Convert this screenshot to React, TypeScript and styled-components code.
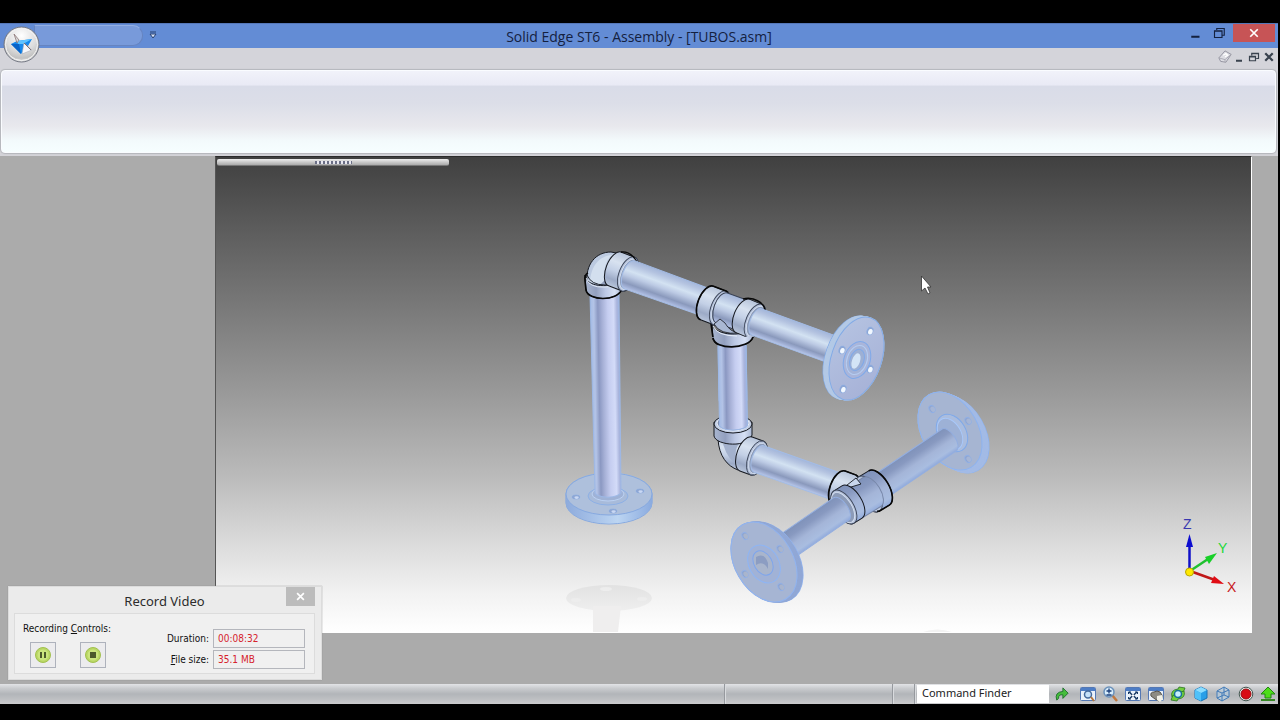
import React from "react";
import styled, { createGlobalStyle, css } from "styled-components";

const GlobalStyle = createGlobalStyle`
  * { box-sizing: border-box; }
  body { margin: 0; background: #000; font-family: "Noto Sans", "Open Sans", sans-serif; }
  button { font: inherit; padding: 0; margin: 0; border: 0; background: none; cursor: default; }
`;

const Screen = styled.div`
  min-height: 100vh;
  padding: 23px 2px 16px 0;
  display: flex;
  flex-direction: column;
  background: #000;
`;

const AppWindow = styled.div`
  flex: 1;
  display: flex;
  flex-direction: column;
  position: relative;
  background: #d3d3d8;
`;

const TitleBar = styled.header`
  height: 25px;
  display: grid;
  grid-template-columns: 1fr auto 1fr;
  background: #638cd5;
  border-top: 1px solid #5577b8;
`;

const QuickAccess = styled.div`
  display: flex;
  align-items: flex-start;
  gap: 6px;
  padding: 1px 0 0 34px;
`;

const QuickTray = styled.div`
  width: 109px;
  height: 21px;
  border: 1px solid #6684c0;
  border-top-color: #93aee2;
  border-radius: 0 10px 10px 0;
  background: #789ada;
`;

const QuickMenu = styled.button`
  width: 8px;
  height: 20px;
  display: grid;
  place-items: center;
`;

const Title = styled.h1`
  margin: 0;
  font-family: "Open Sans", "Noto Sans", sans-serif;
  font-size: 14px;
  line-height: 25px;
  font-weight: 400;
  color: #14213f;
`;

const WindowButtons = styled.div`
  display: flex;
  justify-content: flex-end;
  align-items: flex-start;
  padding-right: 3px;
`;

const WindowButton = styled.button<{ $close?: boolean }>`
  width: ${(p) => (p.$close ? 42 : 24)}px;
  height: 18px;
  margin-left: ${(p) => (p.$close ? 2 : 0)}px;
  display: grid;
  place-items: center;
  background: ${(p) => (p.$close ? "#c75456" : "transparent")};
`;

const AppButton = styled.button`
  position: absolute;
  left: 3px;
  top: 3px;
  width: 37px;
  height: 37px;
`;

const MenuBar = styled.nav`
  height: 22px;
  display: flex;
  justify-content: flex-end;
  align-items: flex-start;
  gap: 3px;
  padding: 2px 3px 0 0;
  background: #d4d4da;
`;

const MenuButton = styled.button`
  width: 12px;
  height: 14px;
  display: grid;
  place-items: center;
`;

const Ribbon = styled.section`
  height: 83px;
  margin: 0 2px 0 1px;
  border: 1px solid #fafcff;
  border-radius: 4px;
  box-shadow: 0 0 1px 1px #b4b6bc;
  background: linear-gradient(#f1f2fa 0, #e9eaf5 17%, #d9dce8 19%, #dcdee8 40%, #e8e8ed 68%, #f3fafc 86%, #f6feff 100%);
`;

const Workspace = styled.main`
  flex: 1;
  position: relative;
  display: flex;
  margin-top: 3px;
  padding: 0 26px 51px 215px;
  background: #ababab;
`;

const Viewport = styled.section`
  flex: 1;
  min-height: 400px;
  display: flex;
  flex-direction: column;
  border: 1px solid #fff;
  border-left-color: #555;
  border-top-color: #2b2b2b;
  background: linear-gradient(#404040 0, #5c5c5c 15%, #787878 31%, #989898 49%, #bababa 67%, #d8d8d8 80%, #f2f2f2 92%, #fff 100%);
`;

const DockHandle = styled.div`
  width: 232px;
  height: 7px;
  margin: 2px 0 0 1px;
  display: grid;
  place-items: center;
  border-radius: 2px;
  border-bottom: 1px solid #777;
  background: linear-gradient(#ececec, #a9a9a9);
`;

const Grip = styled.div`
  width: 37px;
  height: 3px;
  background: repeating-linear-gradient(90deg, #6b6f86 0 2px, #e8e8f0 2px 4px);
`;

const Scene = styled.svg`
  display: block;
  flex: 1;
  width: 100%;
  min-height: 0;
`;

const Dialog = styled.section`
  position: absolute;
  left: 8px;
  bottom: 4px;
  width: 314px;
  border: 1px solid #dcdcdc;
  background: #ebebeb;
  padding: 0 6px 5px 5px;
  box-shadow: 0 0 1px #888;
`;

const DialogHeader = styled.header`
  height: 26px;
  display: grid;
  grid-template-columns: 29px 1fr 29px;
`;

const DialogTitle = styled.h2`
  margin: 0;
  font-size: 13px;
  line-height: 28px;
  font-weight: 400;
  text-align: center;
  color: #2c2c2c;
`;

const DialogClose = styled.button`
  width: 29px;
  height: 19px;
  display: grid;
  place-items: center;
  background: #bcbcbc;
`;

const DialogBody = styled.div`
  height: 61px;
  display: flex;
  justify-content: space-between;
  padding: 8px 9px 0 8px;
  border: 1px solid #dcdcdc;
  background: #f0f0f0;
  font-family: "DejaVu Sans Condensed", "DejaVu Sans", sans-serif;
  font-size: 10px;
  line-height: 13px;
  color: #111;
`;

const Controls = styled.div`
  display: flex;
  flex-direction: column;
  gap: 7px;
`;

const ControlRow = styled.div`
  display: flex;
  gap: 24px;
  padding-left: 7px;
`;

const RecordButton = styled.button`
  width: 26px;
  height: 26px;
  display: grid;
  place-items: center;
  border: 1px solid #aeb2bc;
  background: #ececee;
`;

const Fields = styled.div`
  display: flex;
  flex-direction: column;
  gap: 2px;
  padding-top: 7px;
`;

const Field = styled.label`
  display: flex;
  justify-content: flex-end;
  align-items: center;
  gap: 4px;
`;

const Readout = styled.input`
  width: 92px;
  height: 19px;
  padding: 0 4px;
  border: 1px solid #b4b6bc;
  background: #f0f0f0;
  font: inherit;
  color: #d6232c;
  outline: none;
`;

const StatusBar = styled.footer`
  height: 20px;
  display: flex;
  background: linear-gradient(#e2e3e6 0, #c9cbce 22%, #b2b5b9 50%, #bdbfc2 75%, #cbcbcd 100%);
`;

const pane = css`
  border-right: 1px solid #96999e;
  box-shadow: 1px 0 0 #d9dbde;
`;

const StatusPane = styled.div<{ $width?: number }>`
  ${pane}
  flex: ${(p) => (p.$width ? `0 0 ${p.$width}px` : "1")};
`;

const CommandFinder = styled.input`
  width: 132px;
  height: 18px;
  margin: 1px 5px 0 2px;
  padding: 0 4px 3px 5px;
  border: 0;
  outline: none;
  background: #fff;
  font: 11px "Noto Sans", "Open Sans", sans-serif;
  color: #222;
  &::placeholder { color: #222; opacity: 1; }
`;

const ViewTools = styled.div`
  width: 196px;
  margin: 0 2px 0 10px;
  display: flex;
  justify-content: space-between;
`;

const ToolButton = styled.button`
  width: 16px;
  height: 20px;
  display: grid;
  place-items: center;
`;

type CylinderProps = {
  x1: number; y1: number; x2: number; y2: number;
  r: number; end?: number; k?: number; paint?: string; stroke?: string; mouth?: boolean; heavy?: boolean;
};

/* A shaded cylinder whose near end is (x2, y2); k is the foreshortening of its caps. */
function Cylinder({ x1, y1, x2, y2, r, end = r, k = 0.5, paint = "steel", stroke = "#a3bce6", mouth, heavy }: CylinderProps) {
  const len = Math.hypot(x2 - x1, y2 - y1);
  const angle = (Math.atan2(y2 - y1, x2 - x1) * 180) / Math.PI;
  return (
    <g transform={`translate(${x1} ${y1}) rotate(${angle})`} stroke={stroke}>
      <path
        d={`M0 ${-r}A${r * k} ${r} 0 0 0 0 ${r}L${len} ${end}A${end * k} ${end} 0 0 0 ${len} ${-end}Z`}
        fill={`url(#${paint})`}
      />
      {mouth && (
        <>
          <ellipse cx={len} rx={end * k} ry={end} fill="#b4c1da" stroke="#3a4356" strokeWidth={0.9} />
          <ellipse cx={len + 1} rx={(end - 2) * k} ry={end - 2} fill="#8c9bb8" stroke="#d6e0f0" strokeWidth={0.9} />
        </>
      )}
      {heavy && <path d={`M${len + 2} ${-r + 1}L${len} ${-r}L0 ${-r}A${r * k} ${r} 0 0 0 0 ${r}`} fill="none" stroke="#080808" strokeWidth={1.6} />}
    </g>
  );
}

type FlangeProps = {
  x: number; y: number; dx: number; dy: number; rx: number; ry: number; rot: number;
  face: string; side: string; line: string; holes: number[][]; light?: string;
};

function Flange({ x, y, dx, dy, rx, ry, rot, face, side, line, holes, light = "#dce8fb" }: FlangeProps) {
  const layers = Array.from({ length: 9 }, (_, i) => 1 - i / 8);
  return (
    <g>
      {layers.map((t) => (
        <ellipse key={t} rx={rx} ry={ry} fill={side} stroke={t === 1 ? line : side}
          transform={`translate(${x + dx * t} ${y + dy * t}) rotate(${rot})`} />
      ))}
      <ellipse rx={rx} ry={ry} fill={face} stroke={line} transform={`translate(${x} ${y}) rotate(${rot})`} />
      {holes.map(([hx, hy]) => (
        <g key={`${hx}-${hy}`} transform={`translate(${hx} ${hy}) rotate(${rot})`}>
          <ellipse rx={rx > ry ? 4 : 3} ry={rx > ry ? 2 : 4} fill="#8fa6d2" stroke={line} strokeWidth={0.6} />
          <ellipse cx={0.6} cy={0.6} rx={2.2} ry={rx > ry ? 1.4 : 2.8} fill={light} />
        </g>
      ))}
    </g>
  );
}

function Ring({ x, y, rx, ry, rot, fill = "none", stroke = "#7fa9ea" }: { x: number; y: number; rx: number; ry: number; rot: number; fill?: string; stroke?: string }) {
  return <ellipse rx={rx} ry={ry} fill={fill} stroke={stroke} transform={`translate(${x} ${y}) rotate(${rot})`} />;
}

type Stops = [number, string][];

const steelStops: Stops = [
  [0, "#a3b6da"], [0.15, "#b4c3e0"], [0.38, "#d3e2f2"], [0.55, "#bccae4"], [0.8, "#8a99bc"], [0.92, "#a4b3d8"], [1, "#b9c9ea"],
];
const uprightStops: Stops = [
  [0, "#a6bde6"], [0.12, "#b3c3e6"], [0.26, "#8b98c2"], [0.4, "#a6b0d6"], [0.6, "#c5cdf0"], [0.8, "#d3dbf8"], [0.92, "#a9b4dc"], [1, "#9db3e0"],
];
const glassStops: Stops = [
  [0, "#7f92ba"], [0.25, "#8899c0"], [0.55, "#a4b5d8"], [0.85, "#a9bde0"], [1, "#92abdc"],
];
const fittingStops: Stops = [
  [0, "#b6c3d9"], [0.3, "#d8e2f0"], [0.55, "#c3d0e6"], [0.8, "#9caac6"], [1, "#b9c6dc"],
];
const collarStops: Stops = [
  [0, "#a9b6d0"], [0.3, "#93a0bf"], [0.55, "#bcc8e4"], [0.8, "#d6e0f4"], [1, "#aab8d4"],
];

function Gradient({ id, stops, dir = "down" }: { id: string; stops: Stops; dir?: "down" | "up" | "right" }) {
  return (
    <linearGradient id={id} x1="0" y1={dir === "up" ? 1 : 0} x2={dir === "right" ? 1 : 0} y2={dir === "down" ? 1 : 0}>
      {stops.map(([o, c]) => <stop key={o} offset={o} stopColor={c} />)}
    </linearGradient>
  );
}

const ink = "#15181f";

function PipeAssembly() {
  return (
    <Scene viewBox="217 166 1035 466" role="img" aria-label="Pipe assembly">
      <defs>
        <Gradient id="steel" stops={steelStops} />
        <Gradient id="upright" stops={uprightStops} dir="up" />
        <Gradient id="glass" stops={glassStops} dir="up" />
        <Gradient id="glassFar" stops={glassStops} dir="up" />
        <Gradient id="fitting" stops={fittingStops} />
        <Gradient id="collar" stops={collarStops} dir="right" />
        <linearGradient id="faceA" x1="0" y1="0" x2="1" y2="1">
          <stop offset="0" stopColor="#b6c4e2" /><stop offset="1" stopColor="#a5b0d6" />
        </linearGradient>
        <linearGradient id="rim" x1="0" y1="0" x2="1" y2="0">
          <stop offset="0" stopColor="#8eabdc" /><stop offset="0.6" stopColor="#bcd5f2" /><stop offset="1" stopColor="#8babdf" />
        </linearGradient>
        <linearGradient id="shade" x1="0" y1="0" x2="0" y2="1">
          <stop offset="0" stopColor="#e2e2e2" /><stop offset="1" stopColor="#efefef" />
        </linearGradient>
      </defs>

      {/* floor reflection */}
      <ellipse cx="610" cy="598" rx="43" ry="13" fill="url(#shade)" />
      <path d="M594 606H622L619 632H594Z" fill="#efeeee" />
      <g fill="#ededed"><ellipse cx="577" cy="600" rx="5" ry="2" /><ellipse cx="643" cy="599" rx="5" ry="2" /><ellipse cx="607" cy="589" rx="6" ry="2" /></g>
      <path d="M924 632Q938 627 953 632Z" fill="#f2f2f2" />

      {/* floor flange and riser */}
      <Flange x={610} y={494} dx={0} dy={9} rx={43} ry={21} rot={0} face="#aec0dc" side="url(#rim)" line="#86a9e0"
        holes={[[577, 497], [641, 491], [614, 511]]} light="#c9d8f4" />
      <Ring x={609} y={496} rx={20} ry={9} rot={0} fill="#a8bbda" stroke="#8db0e6" />
      <Ring x={609} y={494} rx={16} ry={7} rot={0} fill="#9fb2d6" stroke="#bdd2f3" />
      <Cylinder x1={605.5} y1={294} x2={609} y2={492} r={14.5} end={13} k={0.4} paint="upright" stroke="#9db8e6" />

      {/* upper-left elbow */}
      <path d="M588 284C586 264 597 252 612 252L628 255L622 287L606 288Z" fill="#bccae0" stroke={ink} />
      <path d="M591 282C592 266 600 256 613 255C605 262 604 272 607 285Z" fill="#d3dfee" />
      <path d="M600 285Q607 281 610 272L618 287Z" fill="#93a0bd" />
      <path d="M586 275C586 285 603 288 620 284L623 289C618 302 589 301 587 290Z" fill="url(#collar)" stroke={ink} />
      <path d="M587 278Q590 288 606 287L616 286" fill="none" stroke="#e4ebf6" />
      <path d="M588 275Q592 285 606 285L614 284" fill="none" stroke={ink} strokeWidth="0.9" />
      <path d="M589 273Q585 275 586 281L587 290C589 301 618 302 623 289" fill="none" stroke="#080808" strokeWidth="1.6" />
      <Cylinder x1={616} y1={269} x2={629} y2={274} r={18} paint="fitting" stroke={ink} mouth />
      <path d="M622 252Q632 251 638 262" fill="none" stroke="#080808" strokeWidth="1.4" />
      <Cylinder x1={631} y1={275} x2={706} y2={302} r={15} end={14} />

      {/* upper tee */}
      <Cylinder x1={733} y1={338} x2={734} y2={400} r={14} paint="upright" k={0.3} stroke="#9db8e6" />
      <path d="M713 324C713 336 752 338 752 326L754 336C750 350 716 351 714 338Z" fill="url(#collar)" stroke={ink} />
      <path d="M712 324L714 338C716 350 749 350 754 337" fill="none" stroke="#080808" strokeWidth="1.6" />
      <Cylinder x1={708} y1={303} x2={721} y2={308} r={18} paint="fitting" stroke={ink} mouth heavy />
      <Cylinder x1={723} y1={308} x2={748} y2={317} r={16} paint="steel" stroke="#3a4356" />
      <path d="M715 324L721 319L726 323Q731 332 740 333Q721 335 715 324Z" fill="#aab8d3" stroke={ink} strokeWidth="0.8" />
      <path d="M714 326Q718 336 738 336" fill="none" stroke="#e8effa" />
      <Cylinder x1={744} y1={316} x2={756} y2={321} r={18} paint="fitting" stroke={ink} mouth />
      <path d="M744 299Q752 297 759 301Q765 304 766 310" fill="none" stroke="#080808" strokeWidth="1.5" />
      <Cylinder x1={758} y1={322} x2={832} y2={349} r={14} />

      {/* upper-right flange */}
      <Flange x={857.5} y={358.5} dx={-6} dy={-1} rx={25} ry={43} rot={19} face="url(#faceA)" side="#b3c9e6" line="#83abe6"
        holes={[[871, 331], [843, 350], [871, 369], [844, 389]]} light="#f1f8ff" />
      <Ring x={858} y={360} rx={13} ry={19} rot={19} fill="#a9b5da" />
      <Ring x={858} y={360} rx={10} ry={15} rot={19} fill="#a3b3d8" stroke="#b5cdf2" />
      <Ring x={858} y={360} rx={7} ry={11} rot={19} fill="#9db0d4" />
      <ellipse cx="857" cy="361" rx="4" ry="8" fill="#d3e4f6" transform="rotate(19 857 361)" />

      {/* lower elbow */}
      <path d="M719 439C720 456 728 466 739 470L755 462L748 437Z" fill="url(#fitting)" stroke={ink} />
      <path d="M724 444Q729 461 741 467Q733 452 740 444Z" fill="#a3b1cd" />
      <path d="M715 422V436C717 446 750 448 753 435V422Z" fill="url(#collar)" stroke={ink} />
      <ellipse cx="734" cy="424" rx="19" ry="9" fill="#c4d0e6" stroke={ink} />
      <ellipse cx="734" cy="423" rx="16" ry="8" fill="#7d8caf" stroke="#e8eef8" />
      <Cylinder x1={733} y1={347} x2={734.5} y2={425} r={14} paint="upright" k={0.35} stroke="#9db8e6" />
      <path d="M713 337L714 339C716 350 749 350 754 337L752 335Q735 342 713 337Z" fill="url(#collar)" />
      <path d="M714 338C716 350 749 350 754 337" fill="none" stroke="#080808" strokeWidth="1.6" />
      <Cylinder x1={747} y1={454} x2={758} y2={458} r={18} paint="fitting" stroke={ink} mouth />
      <Cylinder x1={760} y1={459} x2={836} y2={486} r={14} />

      {/* lower tee: branch, run and both flanged ends */}
      <Flange x={951} y={431} dx={7} dy={3} rx={28} ry={42} rot={-30} face="#a6b5d2" side="#a3bbe6" line="#8db3f0"
        holes={[[933, 409], [969, 421], [969, 459]]} light="#a6b6d6" />
      <Ring x={953} y={433} rx={14} ry={20} rot={-30} fill="#aabddf" />
      <Ring x={951} y={434} rx={11} ry={17} rot={-30} fill="#9db1d6" stroke="#a8c8fa" />
      <Cylinder x1={950} y1={440} x2={882} y2={486} r={13} paint="glassFar" stroke="#93aee0" />
      <Cylinder x1={840} y1={488} x2={851} y2={492} r={18} paint="fitting" stroke={ink} heavy />
      <Cylinder x1={880} y1={488} x2={870} y2={494} r={20} paint="glass" stroke={ink} mouth heavy />
      <Cylinder x1={873} y1={492} x2={850} y2={506} r={17} paint="glass" stroke="#7787a8" />
      <path d="M843 489L857 478L862 484L852 487L840 490Z" fill="#c8d6ec" stroke={ink} strokeWidth="0.9" />
      <Cylinder x1={853} y1={502} x2={845} y2={507} r={19} paint="glass" stroke={ink} mouth />
      <Cylinder x1={842} y1={509} x2={787} y2={547} r={13.5} paint="glass" stroke="#93aee0" />
      <Flange x={765} y={562} dx={6} dy={0} rx={29} ry={43} rot={-30} face="#a6b5d3" side="#91a8d6" line="#91b4f0"
        holes={[[746, 536], [781, 549], [746, 574], [782, 587]]} light="#a9b5cd" />
      <Ring x={765} y={564} rx={15} ry={20} rot={-30} stroke="#8eb5f5" fill="#a1b2d6" />
      <Ring x={764} y={563} rx={9} ry={13} rot={-30} stroke="#7da5ee" fill="#a9b5cc" />
      <path d="M757 557Q765 552 769 563V569Q764 560 757 565Z" fill="#8c9dc2" />

      {/* axis triad */}
      <g strokeWidth="2.5" fill="none">
        <path d="M1190.500 571V541" stroke="#1010c8" />
        <path d="M1191 571L1209 559" stroke="#20c030" />
        <path d="M1191 571L1216 580" stroke="#c01818" />
      </g>
      <path d="M1190.500 534L1187 547H1194Z" fill="#0d0dd0" />
      <path d="M1218 553L1206 557L1210 564Z" fill="#18d028" />
      <path d="M1225 584L1215 576L1212 583Z" fill="#e00c14" />
      <circle cx="1190.500" cy="572" r="4" fill="#ffe800" stroke="#b9a800" />
      <g fontFamily="Liberation Sans, sans-serif" fontSize="14">
        <text x="1184" y="529" fill="#3838b0">Z</text>
        <text x="1219" y="553" fill="#20d838">Y</text>
        <text x="1228" y="592" fill="#c81820">X</text>
      </g>

      {/* pointer */}
      <path d="M922.500 276V291L926 288L929 294L931 293L928.500 287H932Z" fill="#fff" stroke="#333" strokeWidth="0.8" />
    </Scene>
  );
}

function Glyph({ children, size = 16 }: { children: React.ReactNode; size?: number }) {
  return <svg width={size} height={size} viewBox="0 0 16 16" fill="none" aria-hidden="true">{children}</svg>;
}

const WindowFrame = () => (
  <>
    <rect x="0.5" y="1.500" width="15" height="13" rx="1" fill="#eaf2fb" stroke="#5478b4" />
    <path d="M1 2H15V5H1Z" fill="#4d7dc6" />
  </>
);

const tools: { label: string; art: React.ReactNode }[] = [
  { label: "Zoom Area", art: <><WindowFrame /><circle cx="8" cy="8.500" r="3.500" fill="#c5e1fa" stroke="#456a9c" strokeWidth="1.500" /><path d="M11 11L14 15" stroke="#b7773c" strokeWidth="2" /></> },
  { label: "Zoom", art: <><path d="M9 9L14 15" stroke="#c1783f" strokeWidth="2.500" /><circle cx="6" cy="6" r="5" fill="#d8edfc" stroke="#6b91ba" strokeWidth="1.500" /><path d="M3.500 5H8.500M6 2.500V7.500M3.500 9H8.500" stroke="#173c79" strokeWidth="1.300" /></> },
  { label: "Fit", art: <><WindowFrame /><path d="M4 6L12 13M12 6L4 13" stroke="#173863" strokeWidth="1.500" /><path d="M3.500 8V6H6M10 6H12.500V8M3.500 11V13H6M10 13H12.500V11" stroke="#173863" /><rect x="7" y="8.500" width="2" height="2" fill="#fff" /></> },
  { label: "Pan", art: <><WindowFrame /><path d="M3 10Q2 6 6 6Q9 4 12 6L14 9V13L11 15L7 13Z" fill="#8d8c84" stroke="#56544c" /><path d="M9 10L14 9L15 13L12 16L9 14Z" fill="#f1f1e8" /></> },
  { label: "Rotate", art: <><path d="M2 11Q0 4 8 3L9 1L15 2L13 7L11 6Q5 6 5 10Z" fill="#73cf3d" stroke="#28751f" strokeWidth=".8" /><path d="M14 5Q16 12 8 13L7 15L1 14L3 9L5 10Q11 10 11 6Z" fill="#73cf3d" stroke="#28751f" strokeWidth=".8" /><circle cx="8" cy="8" r="3.500" fill="#c5eeff" stroke="#17719b" strokeWidth="1.500" /></> },
  { label: "Shaded", art: <><path d="M8 1L14 4V12L8 15L2 12V4Z" fill="#299fe8" stroke="#1872b7" /><path d="M2 4L8 1L14 4L8 7Z" fill="#8bddff" /><path d="M8 7V15L2 12V4Z" fill="#4fc1f9" /></> },
  { label: "Visible Edges", art: <path d="M2 5L7 7V15L2 12ZM7 7L14 4V11L7 15M2 5L9 1L14 4M9 1V9L2 12M9 9L14 11" fill="#b8d5ee" fillOpacity=".5" stroke="#427bb8" /> },
  { label: "Record", art: <><circle cx="8" cy="8" r="6.800" fill="#eaf1ef" stroke="#435650" /><circle cx="8" cy="8" r="5" fill="#d90d15" stroke="#980c12" /></> },
  { label: "Upload", art: <><path d="M8 1L15 8H11V12H5V8H1Z" fill="#4ddd19" stroke="#238513" /><path d="M1 14H15" stroke="#368924" strokeWidth="2" /></> },
];

export default function App() {
  return (
    <>
      <GlobalStyle />
      <Screen>
        <AppWindow>
          <TitleBar>
            <QuickAccess>
              <QuickTray />
              <QuickMenu aria-label="Customize quick access">
                <svg width="8" height="8" viewBox="0 0 8 8"><path d="M1 1H7" stroke="#28416f" /><path d="M1 3H7L4 7Z" fill="#dbe5f7" stroke="#28416f" /></svg>
              </QuickMenu>
            </QuickAccess>
            <Title>Solid Edge ST6 - Assembly - [TUBOS.asm]</Title>
            <WindowButtons>
              <WindowButton aria-label="Minimize"><Glyph size={12}><path d="M3 13H14" stroke="#14213f" strokeWidth="2.700" /></Glyph></WindowButton>
              <WindowButton aria-label="Restore"><Glyph size={12}><path d="M2 5H12V14H2ZM2 5.500H12M5 4V2H15V11H12" stroke="#14213f" strokeWidth="1.500" /></Glyph></WindowButton>
              <WindowButton aria-label="Close" $close><Glyph size={10}><path d="M2 2L14 14M14 2L2 14" stroke="#fff" strokeWidth="2.700" /></Glyph></WindowButton>
            </WindowButtons>
          </TitleBar>

          <MenuBar aria-label="Document controls">
            <MenuButton aria-label="Help"><Glyph size={14}><path d="M1 9L8 1L15 5L9 14L3 13Z" fill="#dddde3" stroke="#8e8e9a" /><path d="M1 9L8 11L15 5M8 11V14" stroke="#a6a6b0" /><path d="M6 6L9 4L11 6L8 8" stroke="#fff" strokeWidth="1.500" /></Glyph></MenuButton>
            <MenuButton aria-label="Minimize document"><Glyph size={12}><path d="M4 13H12" stroke="#39424e" strokeWidth="2.700" /></Glyph></MenuButton>
            <MenuButton aria-label="Restore document"><Glyph size={12}><path d="M2 7H10V13H2ZM2 8H10M5 6V3H14V10H11M5 3.500H14" stroke="#39424e" strokeWidth="1.600" /></Glyph></MenuButton>
            <MenuButton aria-label="Close document"><Glyph size={12}><path d="M3 3L13 13M13 3L3 13" stroke="#39424e" strokeWidth="3" /></Glyph></MenuButton>
          </MenuBar>

          <AppButton aria-label="Application menu">
            <svg width="37" height="37" viewBox="0 0 37 37">
              <defs>
                <radialGradient id="orb" cx=".5" cy=".25" r=".8">
                  <stop offset="0" stopColor="#fff" /><stop offset=".55" stopColor="#dcdcdc" /><stop offset=".8" stopColor="#c2c2c2" /><stop offset="1" stopColor="#f4f4f4" />
                </radialGradient>
              </defs>
              <circle cx="18.500" cy="18.500" r="17.500" fill="url(#orb)" stroke="#737783" />
              <circle cx="18.500" cy="18.500" r="16" fill="none" stroke="#f4f4f4" />
              <path d="M8 18L14 15L29 13L25 20L18 28Z" fill="#1688ec" />
              <path d="M8 18L16 18L18 28Z" fill="#0863c8" />
              <path d="M14 15L29 13L20 18L15 18Z" fill="#5fc3ff" />
              <path d="M11 8L16 14L14 17Z" fill="#d7d7d7" stroke="#8e7979" strokeWidth=".8" />
              <path d="M21 17L29 24L19 28Z" fill="#f7f7fa" stroke="#a9adb8" strokeWidth=".6" />
              <path d="M21 17L28 24" stroke="#806f72" />
            </svg>
          </AppButton>

          <Ribbon aria-label="Ribbon" />

          <Workspace>
            <Viewport aria-label="Model view">
              <DockHandle><Grip /></DockHandle>
              <PipeAssembly />
            </Viewport>

            <Dialog role="dialog" aria-labelledby="record-title">
              <DialogHeader>
                <span />
                <DialogTitle id="record-title">Record Video</DialogTitle>
                <DialogClose aria-label="Close recorder"><Glyph size={9}><path d="M2 2L14 14M14 2L2 14" stroke="#fff" strokeWidth="3" /></Glyph></DialogClose>
              </DialogHeader>
              <DialogBody>
                <Controls>
                  <span>Recording <u>C</u>ontrols:</span>
                  <ControlRow>
                    <RecordButton aria-label="Pause"><Glyph><circle cx="8" cy="8" r="7.500" fill="#b9d765" stroke="#a2c04f" /><circle cx="8" cy="8" r="5.500" fill="#cbe57e" /><path d="M6 5V11M10 5V11" stroke="#4c5a2b" strokeWidth="2" /></Glyph></RecordButton>
                    <RecordButton aria-label="Stop"><Glyph><circle cx="8" cy="8" r="7.500" fill="#b9d765" stroke="#a2c04f" /><circle cx="8" cy="8" r="5.500" fill="#cbe57e" /><path d="M5 5H11V11H5Z" fill="#4c5a2b" /></Glyph></RecordButton>
                  </ControlRow>
                </Controls>
                <Fields>
                  <Field>Duration:<Readout readOnly value="00:08:32" /></Field>
                  <Field><span><u>F</u>ile size:</span><Readout readOnly value="35.1 MB" /></Field>
                </Fields>
              </DialogBody>
            </Dialog>
          </Workspace>

          <StatusBar>
            <StatusPane />
            <StatusPane $width={168} />
            <StatusPane $width={22} />
            <CommandFinder aria-label="Command Finder" placeholder="Command Finder" />
            <ToolButton aria-label="Go"><Glyph size={14}><path d="M2 15Q-1 6 9 5V1L15 7L9 13V9Q4 8 4 13Z" fill="#45bd3c" stroke="#1d6c2a" /></Glyph></ToolButton>
            <ViewTools>
              {tools.map((t) => <ToolButton key={t.label} aria-label={t.label}><Glyph>{t.art}</Glyph></ToolButton>)}
            </ViewTools>
          </StatusBar>
        </AppWindow>
      </Screen>
    </>
  );
}
